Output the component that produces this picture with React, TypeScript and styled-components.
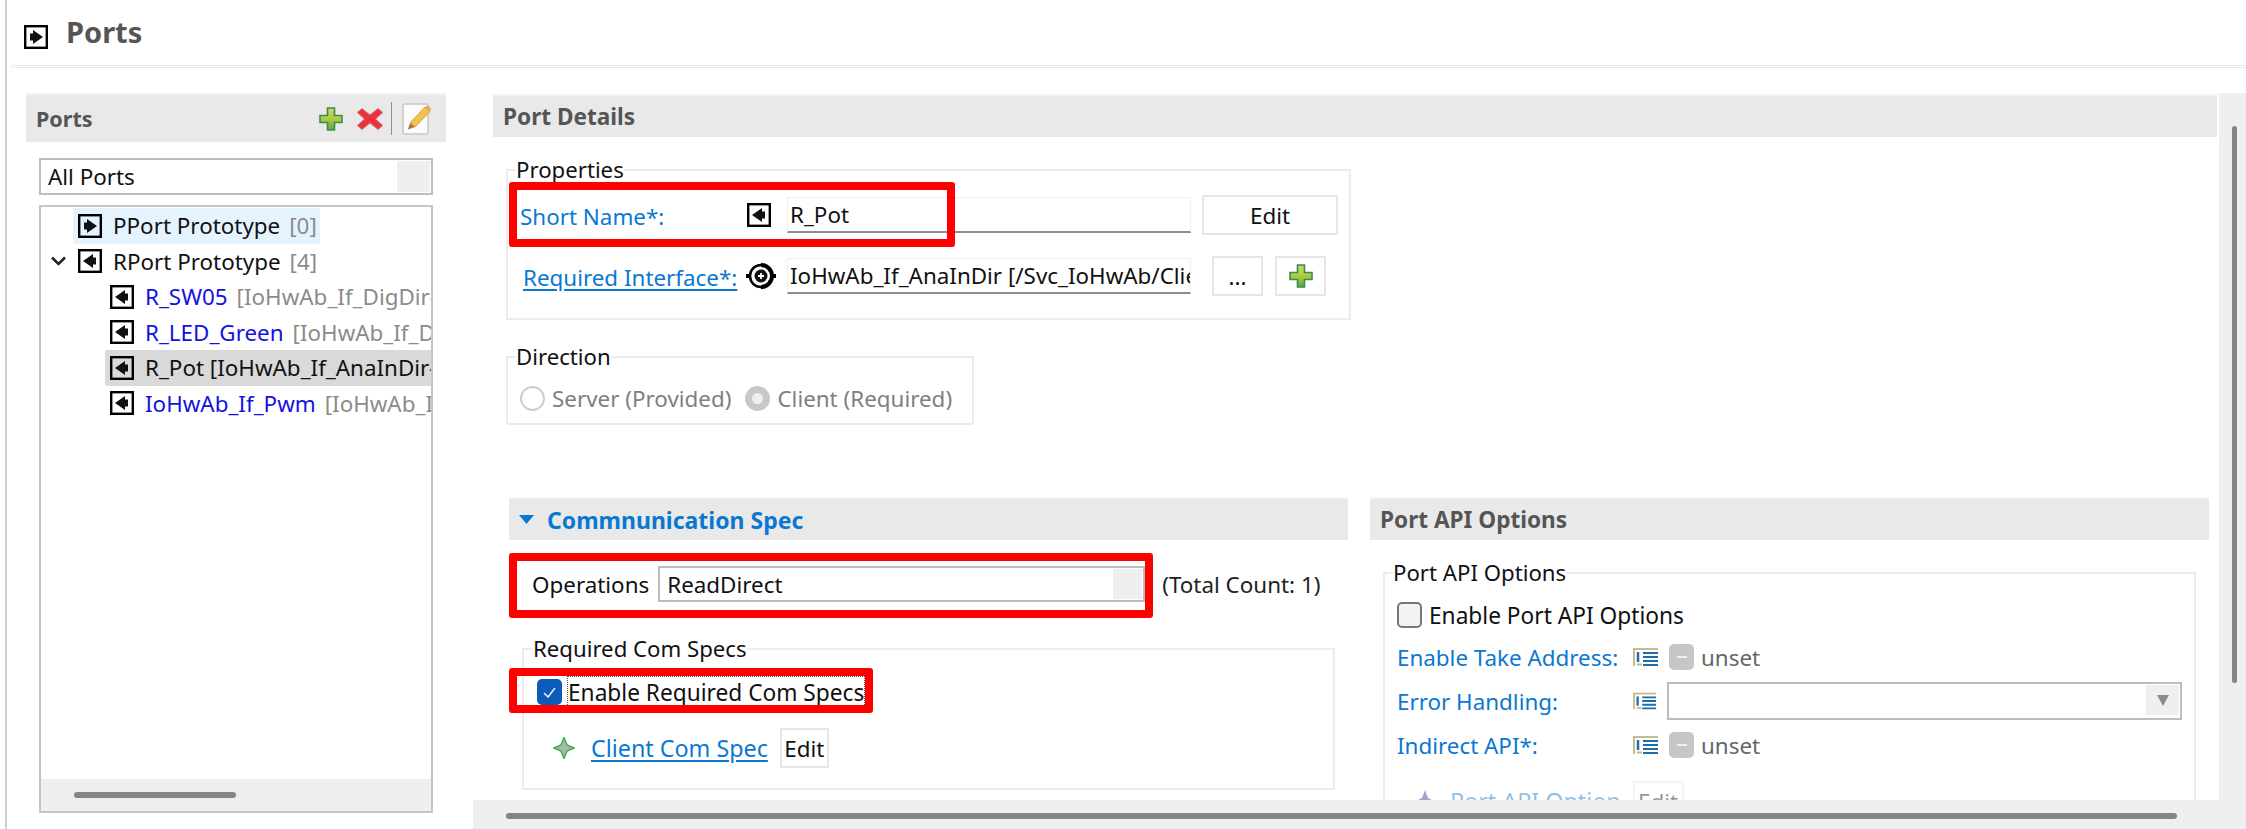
import styled, { createGlobalStyle } from "styled-components";

const GlobalStyle = createGlobalStyle`
  * { box-sizing: border-box; }
  html, body { margin: 0; padding: 0; background: #fff; }
  body { font-family: "Noto Sans", "Open Sans", sans-serif; font-size: 22.4px; color: #111; }
`;

const Page = styled.div`
  position: relative;
  width: 2246px;
  height: 829px;
  overflow: hidden;
  padding-left: 5px;
  background: #fff;
`;

const Frame = styled.div`
  height: 100%;
  border-left: 2px solid #cfcfcf;
  display: flex;
  flex-direction: column;
`;

const TitleBar = styled.header`
  height: 65px;
  flex: none;
  display: flex;
  align-items: center;
  gap: 18px;
  padding: 9px 0 0 17px;
`;

const Title = styled.h1`
  margin: -11px 0 0;
  font-size: 29px;
  line-height: 40px;
  font-weight: 700;
  color: #555;
`;

const Rule = styled.div`
  height: 3px;
  flex: none;
  margin-left: 4px;
  border-top: 1px solid #e8e8e8;
  border-bottom: 1px solid #ececec;
`;

const Body = styled.div`
  flex: 1;
  min-height: 0;
  display: grid;
  grid-template-columns: 466px 1fr;
  grid-template-rows: minmax(0, 1fr);
`;

const Side = styled.aside`
  padding: 27px 0 0 19px;
  display: flex;
  flex-direction: column;
  min-height: 0;
`;

const PanelHeader = styled.div`
  height: 41px;
  flex: none;
  display: flex;
  align-items: center;
  padding-left: 10px;
  background: #e9e9e9;
  box-shadow: 0 -2px 0 #f3f3f3;
  font-weight: 700;
  font-size: 22.6px;
  color: #555;
`;

const SideHeader = styled(PanelHeader)`
  width: 420px;
  height: 47px;
  font-size: 21.5px;
`;

const HeaderTools = styled.div`
  margin-left: auto;
  display: flex;
  align-items: center;
  padding-right: 14px;
`;

const ToolGap = styled.span`
  width: 14px;
`;

const ToolDivider = styled.span`
  width: 1px;
  height: 33px;
  margin: 0 10px 0 8px;
  background: #8f8f8f;
`;

const SideBody = styled.div`
  width: 394px;
  margin-left: 13px;
  display: flex;
  flex-direction: column;
  flex: 1;
  min-height: 0;
  padding: 16px 0 16px;
`;

const Combo = styled.div`
  height: 37px;
  flex: none;
  display: flex;
  align-items: stretch;
  border: 2px solid #bdbdbd;
  background: #fff;
  padding: 1px;
`;

const ComboText = styled.span`
  flex: 1;
  line-height: 32px;
  padding-left: 6px;
  color: #111;
`;

const ComboButton = styled.span<{ $w?: number }>`
  width: ${(p) => p.$w ?? 33}px;
  background: #efefef;
  display: flex;
  align-items: center;
  justify-content: center;
`;

const Tree = styled.div`
  flex: 1;
  margin-top: 10px;
  border: 2px solid #c4c4cc;
  display: flex;
  flex-direction: column;
  min-height: 0;
`;

const TreeList = styled.ul`
  flex: 1;
  margin: 0;
  padding: 1px 0 0;
  list-style: none;
  overflow: hidden;
`;

const TreeRow = styled.li<{ $child?: boolean }>`
  height: 35.5px;
  display: flex;
  align-items: center;
  white-space: nowrap;
  overflow: hidden;
  padding-left: ${(p) => (p.$child ? "64px" : "10px")};
`;

const Twisty = styled.span`
  width: 22px;
  flex: none;
  display: flex;
  align-items: center;
`;

const TreeItem = styled.div<{ $state?: "hover" | "selected" }>`
  height: 100%;
  display: flex;
  align-items: center;
  gap: 11px;
  padding: 0 3px 0 5px;
  flex: ${(p) => (p.$state === "selected" ? 1 : "none")};
  border-radius: 2px;
  background: ${(p) =>
    p.$state === "hover" ? "#e5f3ff" : p.$state === "selected" ? "#d9d9d9" : "transparent"};
`;

const NodeName = styled.span<{ $link?: boolean }>`
  color: ${(p) => (p.$link ? "#1212e0" : "#111")};
`;

const NodeMeta = styled.span`
  margin-left: 9px;
  color: #8b8b8b;
`;

const TreeScroll = styled.div`
  height: 32px;
  flex: none;
  padding: 13px 0 0 33px;
  background: #efefef;
`;

const ThumbX = styled.div<{ $w: number }>`
  width: ${(p) => p.$w}px;
  height: 6px;
  border-radius: 3px;
  background: #858585;
`;

const Main = styled.main`
  min-width: 0;
  min-height: 0;
  padding-top: 25px;
  display: flex;
  flex-direction: column;
`;

const MainRow = styled.div`
  flex: 1;
  min-height: 0;
  display: flex;
`;

const Viewport = styled.div`
  flex: 1;
  min-width: 0;
  overflow: hidden;
  padding: 3px 2px 0 20px;
`;

const ScrollY = styled.div`
  width: 27px;
  flex: none;
  background: #efefef;
  padding: 33px 0 0 13px;
`;

const ThumbY = styled.div`
  width: 5px;
  height: 557px;
  border-radius: 3px;
  background: #858585;
`;

const ScrollX = styled.div`
  height: 29px;
  flex: none;
  background: #efefef;
  padding: 13px 0 0 33px;
`;

const Group = styled.fieldset<{ $w: number }>`
  margin: 0;
  min-width: 0;
  width: ${(p) => p.$w}px;
  border: 2px solid #ececec;
  padding: 0;
`;

const Legend = styled.legend`
  margin-left: -4px;
  padding: 0;
  line-height: 24px;
  font-size: 22.2px;
  color: #111;
`;

const PropertiesGroup = styled(Group)`
  margin: 21px 0 0 13px;
  padding: 13px 12px 22px 12px;
  display: flex;
  flex-direction: column;
  gap: 21px;
`;

const DirectionGroup = styled(Group)`
  margin: 25px 0 0 13px;
  padding: 14px 0 10px 12px;
`;

const FieldRow = styled.div`
  height: 40px;
  display: flex;
  align-items: center;
`;

const FieldLabel = styled.span<{ $w: number; $offset?: number }>`
  flex: none;
  width: ${(p) => p.$w}px;
  padding-left: ${(p) => p.$offset ?? 0}px;
  padding-top: 2px;
  color: #0a78d2;
`;

const FieldLink = styled.span`
  text-decoration: underline;
  text-underline-offset: 3px;
`;

const GlyphSlot = styled.span<{ $w: number }>`
  flex: none;
  width: ${(p) => p.$w}px;
  display: flex;
  align-items: center;
`;

const TextInput = styled.div`
  width: 404px;
  flex: none;
  height: 36px;
  padding: 0 0 0 2px;
  line-height: 34px;
  overflow: hidden;
  white-space: nowrap;
  border: 1px solid #efefef;
  border-bottom: 2px solid #8d8d8d;
  color: #111;
`;

const Button = styled.button<{ $w: number; $gap?: number }>`
  flex: none;
  width: ${(p) => p.$w}px;
  height: 40px;
  margin-left: ${(p) => p.$gap ?? 0}px;
  padding: 0;
  display: inline-flex;
  align-items: center;
  justify-content: center;
  background: #fff;
  border: 2px solid #e6e6e6;
  border-radius: 1px;
  font: inherit;
  color: #111;
`;

const RadioRow = styled.div`
  height: 30px;
  display: flex;
  align-items: center;
`;

const RadioDot = styled.span<{ $on?: boolean }>`
  width: 25px;
  height: 25px;
  flex: none;
  border-radius: 50%;
  border: ${(p) => (p.$on ? "7px solid #c8c8c8" : "2px solid #cdcdcd")};
  background: ${(p) => (p.$on ? "#efefef" : "#fff")};
`;

const RadioText = styled.span`
  margin: 0 14px 0 7px;
  color: #808080;
  white-space: nowrap;
`;

const Columns = styled.div`
  margin: 74px 0 0 16px;
  display: grid;
  grid-template-columns: 839px 839px;
  gap: 22px;
`;

const Column = styled.section`
  min-width: 0;
`;

const SectionTitle = styled.span`
  color: #0a78d2;
  margin-left: 13px;
  font-size: 23px;
`;

const OperationsRow = styled.div`
  height: 36px;
  margin: 26px 0 0 23px;
  display: flex;
  align-items: center;
`;

const OperationsCombo = styled(Combo)`
  width: 487px;
  height: 36px;
  margin-left: 9px;
`;

const CountText = styled.span`
  margin-left: 17px;
  color: #222;
  white-space: nowrap;
`;

const SpecGroup = styled(Group)`
  margin: 35px 0 0 13px;
  padding: 16px 14px 20px 13px;
`;

const CheckRow = styled.label`
  height: 30px;
  display: flex;
  align-items: center;
`;

const CheckBox = styled.span<{ $on?: boolean }>`
  width: 25px;
  height: 26px;
  flex: none;
  display: flex;
  align-items: center;
  justify-content: center;
  border-radius: 5px;
  background: ${(p) => (p.$on ? "#0b5cb8" : "#f3f3f3")};
  border: ${(p) => (p.$on ? "none" : "2px solid #777")};
`;

const CheckText = styled.span<{ $focus?: boolean }>`
  margin-left: ${(p) => (p.$focus ? "6px" : "7px")};
  white-space: nowrap;
  font-size: 22.7px;
  outline: ${(p) => (p.$focus ? "1px dotted #555" : "none")};
`;

const SpecRow = styled.div`
  height: 40px;
  margin: 21px 0 0 16px;
  display: flex;
  align-items: center;
`;

const SpecLink = styled.span`
  margin: 0 12px 0 16px;
  color: #0a78d2;
  font-size: 23.3px;
  text-decoration: underline;
  text-underline-offset: 3px;
`;

const ApiGroup = styled(Group)`
  margin: 21px 0 0 13px;
  padding: 15px 12px 0 12px;
  height: 300px;
`;

const ApiRow = styled.div<{ $h: number; $top?: number }>`
  height: ${(p) => p.$h}px;
  margin-top: ${(p) => p.$top ?? 0}px;
  display: flex;
  align-items: center;
`;

const ApiLabel = styled.span`
  width: 236px;
  flex: none;
  color: #0a78d2;
  white-space: nowrap;
`;

const Toggle = styled.span`
  width: 25px;
  height: 26px;
  margin-left: 10px;
  flex: none;
  display: flex;
  align-items: center;
  justify-content: center;
  border-radius: 5px;
  background: #c6c6c6;
  &::after {
    content: "";
    width: 10px;
    height: 2px;
    background: #f0f0f0;
  }
`;

const Unset = styled.span`
  margin-left: 7px;
  color: #666;
`;

const ApiCombo = styled(Combo)`
  width: 515px;
  height: 38px;
  margin-left: 10px;
  justify-content: flex-end;
  padding: 1px 1px 3px 1px;
`;

const DropCaret = styled.span`
  width: 0;
  height: 0;
  border-left: 6px solid transparent;
  border-right: 6px solid transparent;
  border-top: 11px solid #8a8a8a;
`;

const DisabledRow = styled.div`
  height: 40px;
  margin-top: 14px;
  padding-left: 19px;
  display: flex;
  align-items: center;
  opacity: 0.45;
`;

const Highlight = styled.div<{ $x: number; $y: number; $w: number; $h: number }>`
  position: absolute;
  left: ${(p) => p.$x}px;
  top: ${(p) => p.$y}px;
  width: ${(p) => p.$w}px;
  height: ${(p) => p.$h}px;
  border: 8px solid #ff0000;
  border-radius: 3px;
  pointer-events: none;
`;

const PortGlyph = styled.svg`
  flex: none;
`;

function PortIcon({ dir }: { dir: "in" | "out" }) {
  return (
    <PortGlyph width="24" height="24" viewBox="0 0 24 24">
      <rect x="1.2" y="1.2" width="21.6" height="21.6" fill="none" stroke="#000" strokeWidth="2.4" />
      {dir === "out" ? (
        <path d="M6 8.5h3V5l10 7-10 7v-3.500H6z" fill="#111" />
      ) : (
        <path d="M18 8.500h-3V5L5 12l10 7v-3.500h3z" fill="#111" />
      )}
    </PortGlyph>
  );
}

function PlusIcon() {
  return (
    <svg width="24" height="24" viewBox="0 0 24 24">
      <defs>
        <linearGradient id="plusFill" x1="0" y1="0" x2="0" y2="1">
          <stop offset="0" stopColor="#c9dc62" />
          <stop offset="0.55" stopColor="#a9c93c" />
          <stop offset="1" stopColor="#5fa544" />
        </linearGradient>
      </defs>
      <path
        d="M8.500 1h7v7.500H23v7h-7.500V23h-7v-7.500H1v-7h7.500z"
        fill="url(#plusFill)"
        stroke="#3c8a5a"
        strokeWidth="1.6"
      />
    </svg>
  );
}

function RemoveIcon() {
  return (
    <svg width="26" height="24" viewBox="0 0 26 24">
      <path
        d="M5 2l8 6.500L21 2l4 3.500L18 12l7 6.500-4 3.500-8-6.500L5 22l-4-3.500L8 12 1 5.500z"
        fill="#ee2f3c"
        stroke="#dc4a52"
        strokeWidth="1.4"
        strokeLinejoin="round"
      />
    </svg>
  );
}

function EditIcon() {
  return (
    <svg width="30" height="32" viewBox="0 0 30 32">
      <rect x="1" y="1" width="25" height="30" rx="1.500" fill="#fbfbfb" stroke="#c8c8c8" strokeWidth="1.500" />
      <path d="M8 20L23 4l5 4.500L13 24z" fill="#f2c14e" stroke="#d9a441" strokeWidth="1" />
      <path d="M23 4l5 4.500 1-3-3-3z" fill="#e8a26a" />
      <path d="M8 20l5 4-7 2.500z" fill="#a8763a" />
    </svg>
  );
}

function InterfaceIcon() {
  return (
    <svg width="30" height="28" viewBox="0 0 30 28">
      <path d="M0 14h5M25 14h5" stroke="#000" strokeWidth="4" />
      <path d="M15 3a11 11 0 0 1 0 22" fill="none" stroke="#000" strokeWidth="4" />
      <path d="M15 3a11 11 0 0 0 0 22" fill="none" stroke="#000" strokeWidth="2.500" />
      <circle cx="15" cy="14" r="6.500" fill="#111" />
      <path d="M15 11v6M12 14h6" stroke="#fff" strokeWidth="1.800" />
    </svg>
  );
}

function SpecStar() {
  return (
    <svg width="22" height="22" viewBox="0 0 22 22">
      <path
        d="M11 0.500L14 8l7.500 3-7.500 3-3 7.500L8 14 0.500 11 8 8z"
        fill="#a9b8a9"
        stroke="#3fae46"
        strokeWidth="1.500"
      />
    </svg>
  );
}

function ApiStar() {
  return (
    <svg width="18" height="22" viewBox="0 0 18 22">
      <path d="M9 0l3 8 6 3-6 3-3 8-3-8-6-3 6-3z" fill="#4b2d91" />
    </svg>
  );
}

function ListIcon() {
  return (
    <svg width="26" height="19" viewBox="0 0 26 19">
      <path d="M1 18V1h24" fill="none" stroke="#c9b98c" strokeWidth="2" />
      <path d="M5 4v10" stroke="#1f6fb2" strokeWidth="2.500" />
      <path d="M4 16.500h5" stroke="#c9b98c" strokeWidth="2" />
      <path d="M10 5h15M10 9h15M10 13h15M10 17h15" stroke="#1d6ea8" strokeWidth="2" />
    </svg>
  );
}

function ChevronDown() {
  return (
    <svg width="15" height="10" viewBox="0 0 15 10">
      <path d="M1 1.500l6.500 6.500L14 1.500" fill="none" stroke="#222" strokeWidth="2.500" />
    </svg>
  );
}

function CollapseCaret() {
  return (
    <svg width="15" height="9" viewBox="0 0 15 9">
      <path d="M0 0h15L7.500 9z" fill="#0a78d2" />
    </svg>
  );
}

function CheckMark() {
  return (
    <svg width="13" height="11" viewBox="0 0 13 11">
      <path d="M1 6l4 4 7-9" fill="none" stroke="#e8f1fb" strokeWidth="1.500" />
    </svg>
  );
}

const ports = [
  { name: "R_SW05", meta: "[IoHwAb_If_DigDir-Client]" },
  { name: "R_LED_Green", meta: "[IoHwAb_If_DigDir-Client]" },
  { name: "R_Pot", meta: "", selected: true },
  { name: "IoHwAb_If_Pwm", meta: "[IoHwAb_If_Pwm-Client]" },
];

export default function App() {
  return (
    <Page>
      <GlobalStyle />
      <Frame>
        <TitleBar>
          <PortIcon dir="out" />
          <Title>Ports</Title>
        </TitleBar>
        <Rule />
        <Body>
          <Side>
            <SideHeader>
              Ports
              <HeaderTools>
                <PlusIcon />
                <ToolGap />
                <RemoveIcon />
                <ToolDivider />
                <EditIcon />
              </HeaderTools>
            </SideHeader>
            <SideBody>
              <Combo>
                <ComboText>All Ports</ComboText>
                <ComboButton />
              </Combo>
              <Tree>
                <TreeList>
                  <TreeRow>
                    <Twisty />
                    <TreeItem $state="hover">
                      <PortIcon dir="out" />
                      <NodeName>
                        PPort Prototype<NodeMeta>[0]</NodeMeta>
                      </NodeName>
                    </TreeItem>
                  </TreeRow>
                  <TreeRow>
                    <Twisty>
                      <ChevronDown />
                    </Twisty>
                    <TreeItem>
                      <PortIcon dir="in" />
                      <NodeName>
                        RPort Prototype<NodeMeta>[4]</NodeMeta>
                      </NodeName>
                    </TreeItem>
                  </TreeRow>
                  {ports.map((port) => (
                    <TreeRow $child key={port.name}>
                      <TreeItem $state={port.selected ? "selected" : undefined}>
                        <PortIcon dir="in" />
                        {port.selected ? (
                          <NodeName>R_Pot [IoHwAb_If_AnaInDir-Client]</NodeName>
                        ) : (
                          <NodeName $link>
                            {port.name}
                            <NodeMeta>{port.meta}</NodeMeta>
                          </NodeName>
                        )}
                      </TreeItem>
                    </TreeRow>
                  ))}
                </TreeList>
                <TreeScroll>
                  <ThumbX $w={162} />
                </TreeScroll>
              </Tree>
            </SideBody>
          </Side>

          <Main>
            <MainRow>
              <Viewport>
                <PanelHeader>Port Details</PanelHeader>
                <PropertiesGroup $w={845}>
                  <Legend>Properties</Legend>
                  <FieldRow>
                    <FieldLabel $w={227}>Short Name*:</FieldLabel>
                    <GlyphSlot $w={40}>
                      <PortIcon dir="in" />
                    </GlyphSlot>
                    <TextInput>R_Pot</TextInput>
                    <Button $w={136} $gap={11}>
                      Edit
                    </Button>
                  </FieldRow>
                  <FieldRow>
                    <FieldLabel $w={226} $offset={3}>
                      <FieldLink>Required Interface*:</FieldLink>
                    </FieldLabel>
                    <GlyphSlot $w={41}>
                      <InterfaceIcon />
                    </GlyphSlot>
                    <TextInput>IoHwAb_If_AnaInDir [/Svc_IoHwAb/Client]</TextInput>
                    <Button $w={51} $gap={21}>
                      ...
                    </Button>
                    <Button $w={51} $gap={12}>
                      <PlusIcon />
                    </Button>
                  </FieldRow>
                </PropertiesGroup>

                <DirectionGroup $w={468}>
                  <Legend>Direction</Legend>
                  <RadioRow>
                    <RadioDot />
                    <RadioText>Server (Provided)</RadioText>
                    <RadioDot $on />
                    <RadioText>Client (Required)</RadioText>
                  </RadioRow>
                </DirectionGroup>

                <Columns>
                  <Column>
                    <PanelHeader>
                      <CollapseCaret />
                      <SectionTitle>Commnunication Spec</SectionTitle>
                    </PanelHeader>
                    <OperationsRow>
                      Operations
                      <OperationsCombo>
                        <ComboText>ReadDirect</ComboText>
                        <ComboButton $w={29} />
                      </OperationsCombo>
                      <CountText>(Total Count: 1)</CountText>
                    </OperationsRow>
                    <SpecGroup $w={813}>
                      <Legend>Required Com Specs</Legend>
                      <CheckRow>
                        <CheckBox $on>
                          <CheckMark />
                        </CheckBox>
                        <CheckText $focus>Enable Required Com Specs</CheckText>
                      </CheckRow>
                      <SpecRow>
                        <SpecStar />
                        <SpecLink>Client Com Spec</SpecLink>
                        <Button $w={49}>Edit</Button>
                      </SpecRow>
                    </SpecGroup>
                  </Column>

                  <Column>
                    <PanelHeader>Port API Options</PanelHeader>
                    <ApiGroup $w={813}>
                      <Legend>Port API Options</Legend>
                      <CheckRow>
                        <CheckBox />
                        <CheckText>Enable Port API Options</CheckText>
                      </CheckRow>
                      <ApiRow $h={44} $top={5}>
                        <ApiLabel>Enable Take Address:</ApiLabel>
                        <ListIcon />
                        <Toggle />
                        <Unset>unset</Unset>
                      </ApiRow>
                      <ApiRow $h={44}>
                        <ApiLabel>Error Handling:</ApiLabel>
                        <ListIcon />
                        <ApiCombo>
                          <ComboButton>
                            <DropCaret />
                          </ComboButton>
                        </ApiCombo>
                      </ApiRow>
                      <ApiRow $h={44}>
                        <ApiLabel>Indirect API*:</ApiLabel>
                        <ListIcon />
                        <Toggle />
                        <Unset>unset</Unset>
                      </ApiRow>
                      <DisabledRow>
                        <ApiStar />
                        <SpecLink>Port API Option</SpecLink>
                        <Button $w={51}>Edit</Button>
                      </DisabledRow>
                    </ApiGroup>
                  </Column>
                </Columns>
              </Viewport>
              <ScrollY>
                <ThumbY />
              </ScrollY>
            </MainRow>
            <ScrollX>
              <ThumbX $w={1671} />
            </ScrollX>
          </Main>
        </Body>
      </Frame>
      <Highlight $x={509} $y={182} $w={446} $h={65} />
      <Highlight $x={509} $y={553} $w={644} $h={65} />
      <Highlight $x={509} $y={668} $w={364} $h={45} />
    </Page>
  );
}
